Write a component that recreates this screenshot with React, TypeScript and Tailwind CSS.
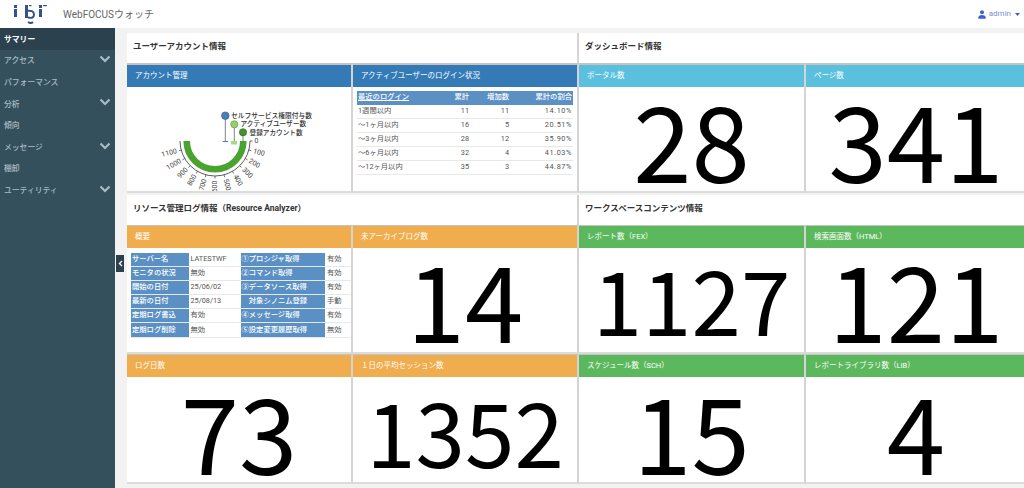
import React from "react";

const jp = { fontFamily: '"Roboto","Noto Sans CJK JP",sans-serif' };

function Chevron() {
  return (
    <svg width="12" height="8" viewBox="0 0 12 8" className="mr-[4px] -mt-[4px]">
      <path d="M1.5 1.5 L6 6 L10.5 1.5" fill="none" stroke="#a9bcc4" strokeWidth="2.2" />
    </svg>
  );
}

const menu: [string, boolean][] = [
  ["アクセス", true],
  ["パフォーマンス", false],
  ["分析", true],
  ["傾向", false],
  ["メッセージ", true],
  ["棚卸", false],
  ["ユーティリティ", true],
];

function Sidebar() {
  return (
    <aside className="w-[115px] shrink-0 bg-[#34505c] text-[7.8px]">
      <div className="h-[22px] bg-[#2b424e] pl-[4px] pt-[1px] flex items-center font-bold text-white">サマリー</div>
      {menu.map(([t, c]) => (
        <div key={t} className="h-[21.6px] pl-[4px] pt-[1px] flex items-center justify-between text-[#a9bcc4] font-medium">
          <span>{t}</span>
          {c && <Chevron />}
        </div>
      ))}
    </aside>
  );
}

function Card({
  title,
  color,
  top = "border-t",
  children,
}: {
  title: string;
  color: string;
  top?: string;
  children: React.ReactNode;
}) {
  return (
    <div className={`flex flex-col bg-white border-b-2 border-r-2 border-b-[#dcdcdc] border-r-[#d4d4d4] min-w-0 min-h-0 ${top} border-t-[#c4c4c4]`}>
      <div className={`h-[21.5px] shrink-0 pl-[8px] flex items-center text-white text-[7.5px] ${color}`}>{title}</div>
      {children}
    </div>
  );
}

function Big({ value, size, shift = "" }: { value: string; size: string; shift?: string }) {
  return (
    <div
      className={`flex-1 min-h-0 flex items-center justify-center text-black leading-none ${size} ${shift}`}
      style={{ fontFamily: '"Noto Sans CJK JP",sans-serif' }}
    >
      {value}
    </div>
  );
}

function Gauge() {
  const cx = 88, cy = 54;
  const labels = [0, 100, 200, 300, 400, 500, 600, 700, 800, 900, 1000, 1100];
  const pt = (r: number, deg: number) => {
    const a = (deg * Math.PI) / 180;
    return [cx + r * Math.cos(a), cy + r * Math.sin(a)];
  };
  const arc = (r: number) => `M ${cx + r} ${cy} A ${r} ${r} 0 0 1 ${cx - r} ${cy}`;
  const legend = { fontFamily: '"Noto Sans CJK JP",sans-serif', fontWeight: 500 };
  return (
    <svg width="224" height="104" viewBox="0 0 224 104" className="block">
      <path d={arc(28.3)} fill="none" stroke="#4ba32f" strokeWidth="6.6" />
      <path d={arc(35)} fill="none" stroke="#333" strokeWidth="0.8" />
      {labels.map((l, i) => {
        const deg = i * 15;
        const [x1, y1] = pt(35, deg);
        const [x2, y2] = pt(37.5, deg);
        const [tx, ty] = pt(39.5, deg);
        return (
          <g key={l}>
            <line x1={x1} y1={y1} x2={x2} y2={y2} stroke="#333" strokeWidth="0.7" />
            <text
              x={tx}
              y={ty}
              fontSize="7"
              fill="#444"
              dominantBaseline="middle"
              textAnchor={deg >= 90 ? "end" : "start"}
              transform={`rotate(${deg >= 90 ? deg - 180 : deg} ${tx} ${ty})`}
              style={{ fontFamily: '"Roboto",sans-serif' }}
            >
              {l}
            </text>
          </g>
        );
      })}
      <line x1="116" y1="45" x2="116" y2="54" stroke="#666" strokeWidth="0.8" />
      <circle cx="116" cy="45.3" r="3.6" fill="#44922f" stroke="#2f6d22" strokeWidth="0.7" />
      <line x1="107.3" y1="37" x2="107.3" y2="54" stroke="#666" strokeWidth="0.8" />
      <rect x="104" y="54" width="6" height="3.5" fill="#a6dc7f" />
      <circle cx="107.3" cy="37.3" r="3.6" fill="#92d06a" stroke="#6a9f4c" strokeWidth="0.7" />
      <line x1="98.3" y1="28" x2="98.3" y2="54" stroke="#666" strokeWidth="0.8" />
      <line x1="95.5" y1="54.5" x2="101.2" y2="54.5" stroke="#4a7ebb" strokeWidth="1" />
      <circle cx="98.3" cy="28.7" r="3.8" fill="#4a7ebb" stroke="#3b6595" strokeWidth="0.7" />
      <text x="104" y="31" fontSize="6.75" fill="#333" style={legend}>セルフサービス権限付与数</text>
      <text x="113.5" y="39" fontSize="6.65" fill="#333" style={legend}>アクティブユーザー数</text>
      <text x="122.5" y="47.5" fontSize="6.65" fill="#333" style={legend}>登録アカウント数</text>
    </svg>
  );
}

const loginRows = [
  ["1週間以内", "11", "11", "14.10%"],
  ["～1ヶ月以内", "16", "5", "20.51%"],
  ["～3ヶ月以内", "28", "12", "35.90%"],
  ["～6ヶ月以内", "32", "4", "41.03%"],
  ["～12ヶ月以内", "35", "3", "44.87%"],
];

function LoginTable() {
  return (
    <div className="pl-[4px] pr-[4px] pt-[4px] text-[7.3px] text-[#555]">
      <div className="h-[14px] bg-[#5b90c4] text-white font-medium flex items-center px-[1px]">
        <span className="w-[88px] underline">最近のログイン</span>
        <span className="w-[23px] text-right">累計</span>
        <span className="w-[40px] text-right">増加数</span>
        <span className="flex-1 text-right">累計の割合</span>
      </div>
      {loginRows.map((r) => (
        <div key={r[0]} className="h-[14px] border-b border-[#e8e8e8] flex items-center px-[1px]">
          <span className="w-[88px]">{r[0]}</span>
          <span className="w-[23px] text-right">{r[1]}</span>
          <span className="w-[40px] text-right">{r[2]}</span>
          <span className="flex-1 text-right tracking-[0.6px]">{r[3]}</span>
        </div>
      ))}
    </div>
  );
}

const summary = [
  ["サーバー名", "LATESTWF", "①プロシジャ取得", "有効"],
  ["モニタの状況", "無効", "②コマンド取得", "有効"],
  ["開始の日付", "25/06/02", "③データソース取得", "有効"],
  ["最新の日付", "25/08/13", "　対象シノニム登録", "手動"],
  ["定期ログ書込", "有効", "④メッセージ取得", "有効"],
  ["定期ログ削除", "無効", "⑤設定変更履歴取得", "無効"],
];

function SummaryTable() {
  return (
    <div className="pl-[4px] pt-[5px] text-[7.3px]">
      {summary.map((r) => (
        <div key={r[0]} className="h-[14.2px] flex items-stretch border-b border-[#e8e8e8]">
          <span className="w-[57.5px] bg-[#5b90c4] text-white font-medium pl-[1px] flex items-center">{r[0]}</span>
          <span className="w-[52px] pl-[2px] text-[#555] flex items-center">{r[1]}</span>
          <span className="w-[84.5px] bg-[#5b90c4] text-white font-medium pl-[1px] flex items-center">{r[2]}</span>
          <span className="w-[22px] pl-[2px] text-[#555] flex items-center">{r[3]}</span>
        </div>
      ))}
    </div>
  );
}

function Title({ children, gap = "" }: { children: React.ReactNode; gap?: string }) {
  return (
    <div className={`col-span-2 bg-white border-r-2 border-r-[#d4d4d4] flex items-center pl-[6px] pb-[3px] text-[8.5px] font-bold text-[#333] ${gap}`}>
      {children}
    </div>
  );
}

const blue = "bg-[#337ab7]";
const cyan = "bg-[#5bc0de]";
const orange = "bg-[#f0ad4e]";
const green = "bg-[#5cb85c]";

export default function App() {
  return (
    <div className="w-[1024px] h-[488px] overflow-hidden bg-[#f2f2f2] flex flex-col" style={jp}>
      <header className="h-[28px] shrink-0 bg-white flex items-center justify-between">
        <div className="flex items-center">
          <svg width="36" height="26" viewBox="0 0 36 26" className="ml-[13px] -mt-[2px]">
            <g fill="#33508f">
              <rect x="1" y="5" width="3" height="3" />
              <rect x="1" y="9" width="3" height="8" />
              <rect x="12" y="5" width="3" height="13" />
              <rect x="16" y="5" width="2.5" height="1.2" />
              <rect x="26" y="9" width="3" height="8" />
              <rect x="26" y="5" width="3" height="3" />
              <rect x="30" y="5" width="4" height="1.2" />
            </g>
            <path d="M13 11 Q21 9.5 21 14.5 Q21 19 15 17.5 M15 22 Q18 24 20 22" fill="none" stroke="#33508f" strokeWidth="2" />
          </svg>
          <span className="ml-[14px] text-[10px] text-[#666]">WebFOCUSウォッチ</span>
        </div>
        <div className="flex items-center text-[8px] text-[#7a8fd8] mr-[4px]">
          <svg width="8" height="9" viewBox="0 0 8 9" className="mr-[3px]">
            <circle cx="4" cy="2.2" r="2" fill="#3f5fd0" />
            <path d="M0.3 8.8 V7 Q0.8 5 4 5 Q7.2 5 7.7 7 V8.8 Z" fill="#3f5fd0" />
          </svg>
          admin
          <svg width="5" height="3" viewBox="0 0 5 3" className="ml-[4px]">
            <path d="M0 0 H5 L2.5 3 Z" fill="#3f5fd0" />
          </svg>
        </div>
      </header>
      <div className="flex-1 flex min-h-0 relative">
        <Sidebar />
        <div className="absolute left-[116px] top-[227px] w-[8px] h-[17px] bg-[#2b424e] flex items-center justify-center">
          <svg width="5" height="7" viewBox="0 0 5 7">
            <path d="M4 1 L1.5 3.5 L4 6" fill="none" stroke="#fff" strokeWidth="1.4" />
          </svg>
        </div>
        <main className="pl-[12px] pt-[5px] flex-1 min-w-0">
          <div className="grid grid-cols-[226px_226px_227px_222px] grid-rows-[30px_130px_32px_129px_130px]">
            <Title>ユーザーアカウント情報</Title>
            <Title>ダッシュボード情報</Title>
            <Card title="アカウント管理" color={blue} top="border-t-2">
              <Gauge />
            </Card>
            <Card title="アクティブユーザーのログイン状況" color={blue} top="border-t-2">
              <LoginTable />
            </Card>
            <Card title="ポータル数" color={cyan} top="border-t-2">
              <Big value="28" size="text-[105px]" shift="pb-[2px]" />
            </Card>
            <Card title="ページ数" color={cyan} top="border-t-2">
              <Big value="341" size="text-[105px]" shift="pb-[2px]" />
            </Card>
            <Title gap="mt-[2px]">リソース管理ログ情報（Resource Analyzer）</Title>
            <Title gap="mt-[2px]">ワークスペースコンテンツ情報</Title>
            <Card title="概要" color={orange}>
              <SummaryTable />
            </Card>
            <Card title="未アーカイブログ数" color={orange}>
              <Big value="14" size="text-[105px]" shift="pb-[4px]" />
            </Card>
            <Card title="レポート数（FEX）" color={green}>
              <Big value="1127" size="text-[89px]" shift="pb-[4px]" />
            </Card>
            <Card title="検索画面数（HTML）" color={green}>
              <Big value="121" size="text-[105px]" shift="pb-[4px]" />
            </Card>
            <Card title="ログ日数" color={orange}>
              <Big value="73" size="text-[105px]" />
            </Card>
            <Card title="１日の平均セッション数" color={orange}>
              <Big value="1352" size="text-[89px]" />
            </Card>
            <Card title="スケジュール数（SCH）" color={green}>
              <Big value="15" size="text-[105px]" />
            </Card>
            <Card title="レポートライブラリ数（LIB）" color={green}>
              <Big value="4" size="text-[105px]" />
            </Card>
          </div>
        </main>
      </div>
    </div>
  );
}
